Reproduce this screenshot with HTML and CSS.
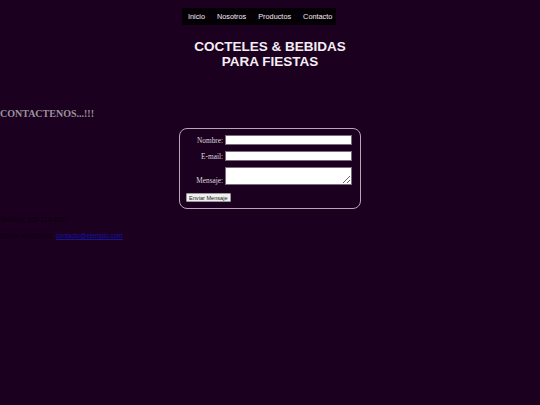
FILE: index.html
```html
<!DOCTYPE html>
<html lang="es">
<head>
<meta charset="utf-8">
<title>Contacto</title>
<link rel="stylesheet" href="styles.css">
</head>
<body>
<nav class="nav">
  <a href="#">Inicio</a>
  <a href="#">Nosotros</a>
  <a href="#">Productos</a>
  <a href="#">Contacto</a>
</nav>
<h1 class="title">COCTELES &amp; BEBIDAS<br>PARA FIESTAS</h1>
<h2 class="contact-title">CONTACTENOS...!!!</h2>
<form class="form">
  <div class="row"><label>Nombre:</label><input type="text"></div>
  <div class="row"><label>E-mail:</label><input type="text"></div>
  <div class="row row-msg"><label>Mensaje:</label><textarea></textarea></div>
  <button type="button" class="btn">Enviar Mensaje</button>
</form>
<p class="info first">Teléfono: 555-123-4567</p>
<p class="info">Correo electrónico: <a href="#">contacto@ejemplo.com</a></p>
</body>
</html>
```
FILE: styles.css
```css
html, body {
  margin: 0;
  padding: 0;
  background: #1c0020;
}
body {
  font-family: "Liberation Serif", serif;
  min-height: 405px;
}
.nav {
  display: flex;
  width: 154px;
  margin: 8px 0 0 182px;
  background: #050005;
  height: 17px;
  align-items: center;
  padding-left: 6px;
  box-sizing: border-box;
}
.nav a {
  font-family: "Liberation Sans", sans-serif;
  font-size: 7.3px;
  color: #f2eef2;
  text-decoration: none;
  margin-right: 12px;
}
.title {
  font-family: "Liberation Sans", sans-serif;
  font-weight: bold;
  font-size: 13.5px;
  line-height: 15px;
  color: #f4eef4;
  text-align: center;
  margin: 14px 0 0;
}
.contact-title {
  font-weight: bold;
  font-size: 10px;
  color: #9a949a;
  margin: 39px 0 0;
  line-height: 12px;
}
.form {
  width: 182px;
  height: 81px;
  box-sizing: border-box;
  margin: 8px 0 0 179px;
  border: 1px solid #b6a6b6;
  border-radius: 8px;
  padding: 6px 8px 0 6px;
}
.row {
  display: flex;
  align-items: flex-end;
  justify-content: flex-end;
  margin-bottom: 6px;
}
.row label {
  font-size: 7.3px;
  color: #ddd8dd;
  margin-right: 2px;
  line-height: 9px;
}
.row input, .row textarea {
  width: 127px;
  height: 10px;
  box-sizing: border-box;
  border: 1px solid #7a6a7a;
  background: #fff;
  padding: 0;
  margin: 0;
}
.row textarea {
  height: 18px;
  resize: vertical;
}
.row-msg {
  margin-bottom: 8px;
}
.btn {
  display: block;
  font-family: "Liberation Sans", sans-serif;
  font-size: 5.6px;
  color: #222;
  background: #f0f0f0;
  border: 1px solid #999;
  border-radius: 1px;
  padding: 1px 2px;
  height: 9px;
  line-height: 6px;
  margin: 0;
}
.info {
  font-family: "Liberation Sans", sans-serif;
  font-size: 6.4px;
  color: #0c000c;
  margin: 0;
  line-height: 9px;
}
.info.first {
  margin-top: 6px;
  margin-bottom: 7px;
}
.info a {
  color: #1414a0;
}
```
